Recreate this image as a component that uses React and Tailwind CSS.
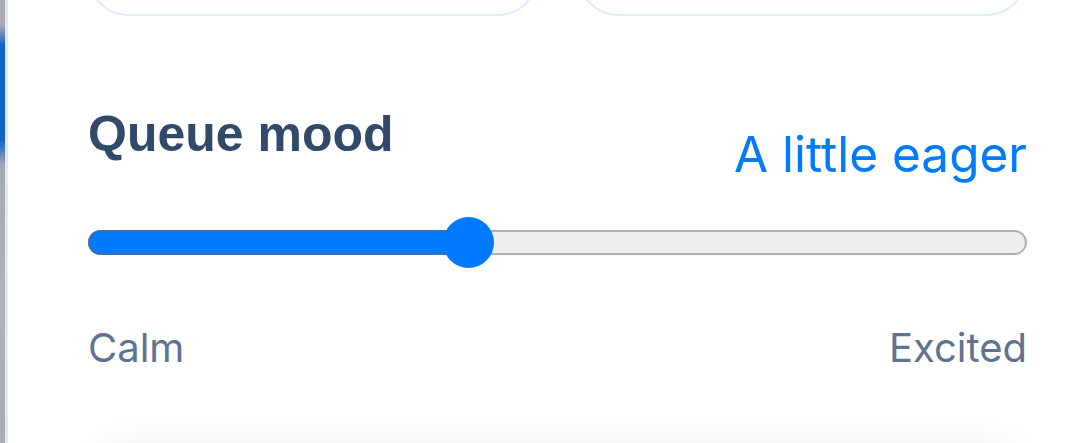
export default function App() {
  return (
    <div className="flex h-[443px] w-[1088px] overflow-hidden bg-white">
      <div className="w-[5px] shrink-0 bg-[linear-gradient(to_bottom,#a9abb0_0px,#a9abb0_25px,#1262c4_45px,#1262c4_140px,#a4a8ae_165px,#a9abb0_200px,#b0b2b7_300px,#a9abb0_443px)]" />
      <div className="w-[3px] shrink-0 bg-[#dceafc]" />
      <div className="min-w-0 flex-1 pl-[80px] pr-[61px]">
        <div className="-mt-[84px] flex gap-[40px]">
          <div className="h-[100px] flex-1 rounded-[40px] border-2 border-[#deedfd] bg-white" />
          <div className="h-[100px] flex-1 rounded-[40px] border-2 border-[#deedfd] bg-white" />
        </div>

        <div className="mt-[88px] flex items-start justify-between">
          <h2 className="font-['Liberation_Sans',Arial,sans-serif] text-[50px] font-bold leading-[60px] text-[#314a6a]">
            Queue mood
          </h2>
          <div className="pt-[20px] font-['Inter',sans-serif] text-[49.5px] leading-[60px] text-[#007aff]">
            A little eager
          </div>
        </div>

        <div className="relative mt-[33px] h-[51px]">
          <div className="absolute left-0 right-0 top-[13px] h-[25px] rounded-full border-2 border-[#b1b1b1] bg-[#efefef]" />
          <div className="absolute left-0 top-[13px] h-[25px] w-[390px] rounded-l-full border-2 border-r-0 border-[#3770b3] bg-[#007aff]" />
          <div className="absolute left-[355px] top-0 h-[51px] w-[51px] rounded-full bg-[#007aff]" />
        </div>

        <div className="mt-[56px] flex justify-between font-['Inter',sans-serif] text-[40px] leading-[48px] text-[#5f7390]">
          <span>Calm</span>
          <span>Excited</span>
        </div>

        <div className="mt-[73px] h-[100px] rounded-[40px] bg-white shadow-[0_-6px_30px_rgba(0,0,0,0.05)]" />
      </div>
    </div>
  );
}
